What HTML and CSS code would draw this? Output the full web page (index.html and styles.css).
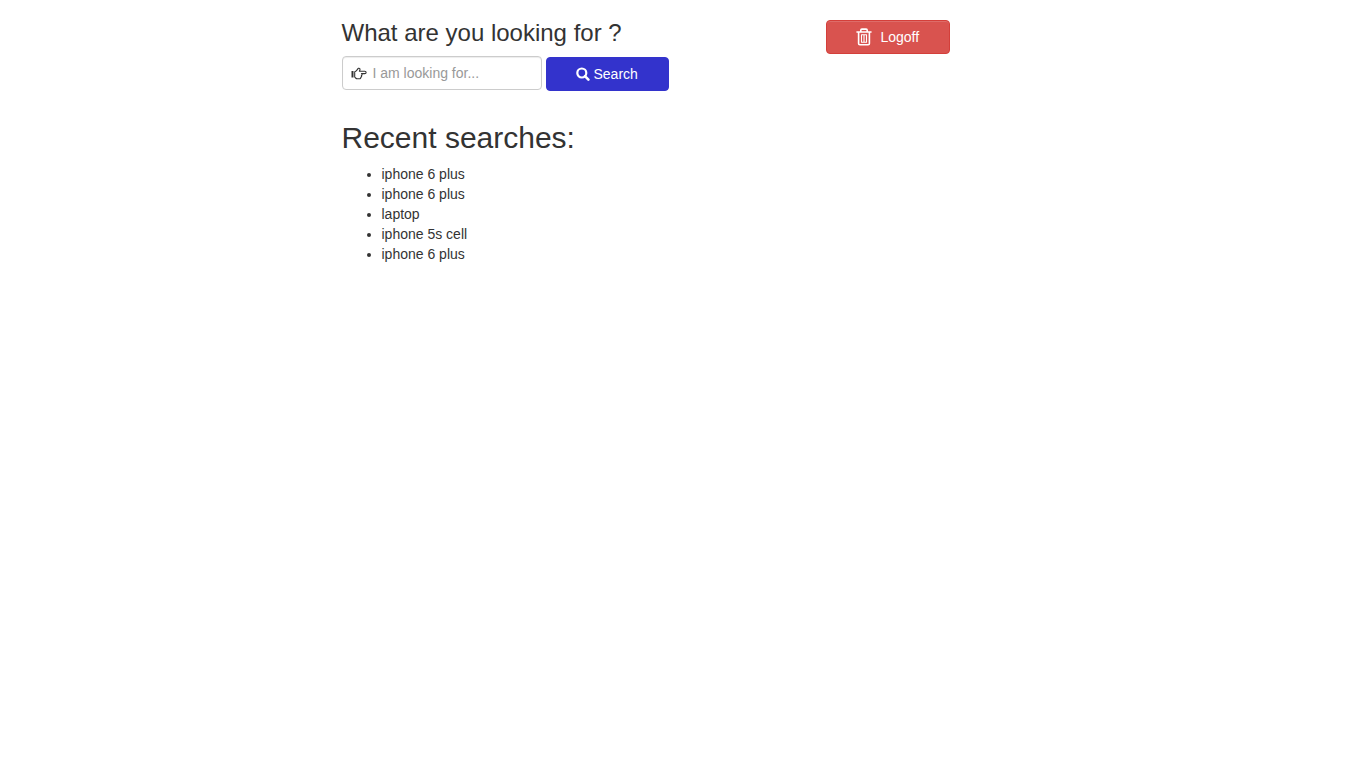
FILE: index.html
```html
<!DOCTYPE html>
<html lang="en">
<head>
<meta charset="utf-8">
<meta name="viewport" content="width=device-width, initial-scale=1">
<title>Search</title>
<link rel="stylesheet" href="styles.css">
</head>
<body>
<main class="page">
  <div class="top">
    <form class="search">
      <label class="search-title" for="query">What are you looking for ?</label>
      <div class="search-row">
        <div class="field">
          <svg class="icon" width="16" height="14" viewBox="0 0 16 14" aria-hidden="true">
            <path d="M.5 5h2v6.500h-2z" fill="#333"/>
            <path d="M3.700 11.300V5.700c1.700 0 2.500-2.600 3.800-3.400 1.100-.4 1.800.6 1.400 1.700l-.5 1.300h5.300c1.900.1 1.900 2.200 0 2.300h-3.200c.9.700.7 1.500-.1 1.900.5.7.2 1.500-.6 1.800.1.900-.4 1.500-1.500 1.500H6.200c-1 0-1.500-.9-2.500-1.500" fill="none" stroke="#333" stroke-width="1.100" stroke-linejoin="round"/>
          </svg>
          <input class="field-input" id="query" type="text" placeholder="I am looking for...">
        </div>
        <button class="button button-search" type="submit">
          <svg class="icon" width="14" height="14" viewBox="0 0 14 14" aria-hidden="true">
            <circle cx="5.800" cy="6" r="4.500" fill="none" stroke="#fff" stroke-width="2.200"/>
            <path d="M9 9.200l3.400 3.400" stroke="#fff" stroke-width="2.600" stroke-linecap="round"/>
          </svg>
          Search
        </button>
      </div>
    </form>
    <div class="account">
      <button class="button button-logoff" type="button">
        <svg class="icon" width="16" height="18" viewBox="0 0 16 18" aria-hidden="true">
          <g fill="none" stroke="#fff" stroke-width="1.600" stroke-linejoin="round" stroke-linecap="round">
            <path d="M1 4h14M4.800 3.700V2.300c0-.7.400-1.200 1.100-1.200h4.200c.7 0 1.100.5 1.100 1.200v1.400M2.600 4.200v11.300c0 .8.500 1.300 1.300 1.300h8.200c.8 0 1.300-.5 1.300-1.300V4.200"/>
            <path d="M5.500 7v7M8 7v7M10.500 7v7M5.500 6.800h5M5.500 14.200h5" stroke-width="1.100"/>
          </g>
        </svg>
        Logoff
      </button>
    </div>
  </div>
  <section>
    <h2 class="recent-title">Recent searches:</h2>
    <ul class="recent-list">
      <li>iphone 6 plus</li>
      <li>iphone 6 plus</li>
      <li>laptop</li>
      <li>iphone 5s cell</li>
      <li>iphone 6 plus</li>
    </ul>
  </section>
</main>
</body>
</html>
```
FILE: styles.css
```css
*,
*::before,
*::after {
  box-sizing: border-box;
}

body {
  margin: 0;
  background: #fff;
  color: #333;
  font: 14px/20px "Liberation Sans", Arial, sans-serif;
}

.page {
  width: 50%;
  min-width: 620px;
  margin: 0 auto;
  padding-top: 20px;
}

.top {
  display: grid;
  grid-template-columns: 71% 1fr;
}

.search-title {
  display: block;
  margin-bottom: 10px;
  font-size: 24px;
  line-height: 26px;
}

.search-row {
  display: flex;
  align-items: flex-end;
  gap: 4px;
  height: 35px;
}

.field {
  display: flex;
  align-items: center;
  gap: 6px;
  align-self: flex-start;
  width: 200px;
  height: 34px;
  padding: 0 8px;
  border: 1px solid #ccc;
  border-radius: 4px;
  box-shadow: inset 0 1px 1px rgba(0, 0, 0, 0.075);
}

.icon {
  flex: none;
}

.field-input {
  flex: 1;
  min-width: 0;
  padding: 0;
  border: 0;
  outline: 0;
  background: transparent;
  color: #555;
  font: inherit;
}

.field-input::placeholder {
  color: #999;
  opacity: 1;
}

.button {
  display: flex;
  align-items: center;
  height: 34px;
  padding: 0 30px 0 29px;
  border: 1px solid transparent;
  border-radius: 4px;
  color: #fff;
  font: inherit;
  cursor: pointer;
}

.button-search {
  gap: 4px;
  border-color: #3333cc;
  background: #3333cc;
}

.button-logoff {
  gap: 8px;
  border-color: #d43f3a;
  background: #d9534f;
  box-shadow: inset 0 1px 0 rgba(255, 255, 255, 0.15);
}

.recent-title {
  margin: 30px 0 10px;
  font-size: 30px;
  font-weight: 400;
  line-height: 33px;
}

.recent-list {
  margin: 0;
  padding-left: 40px;
}
```
